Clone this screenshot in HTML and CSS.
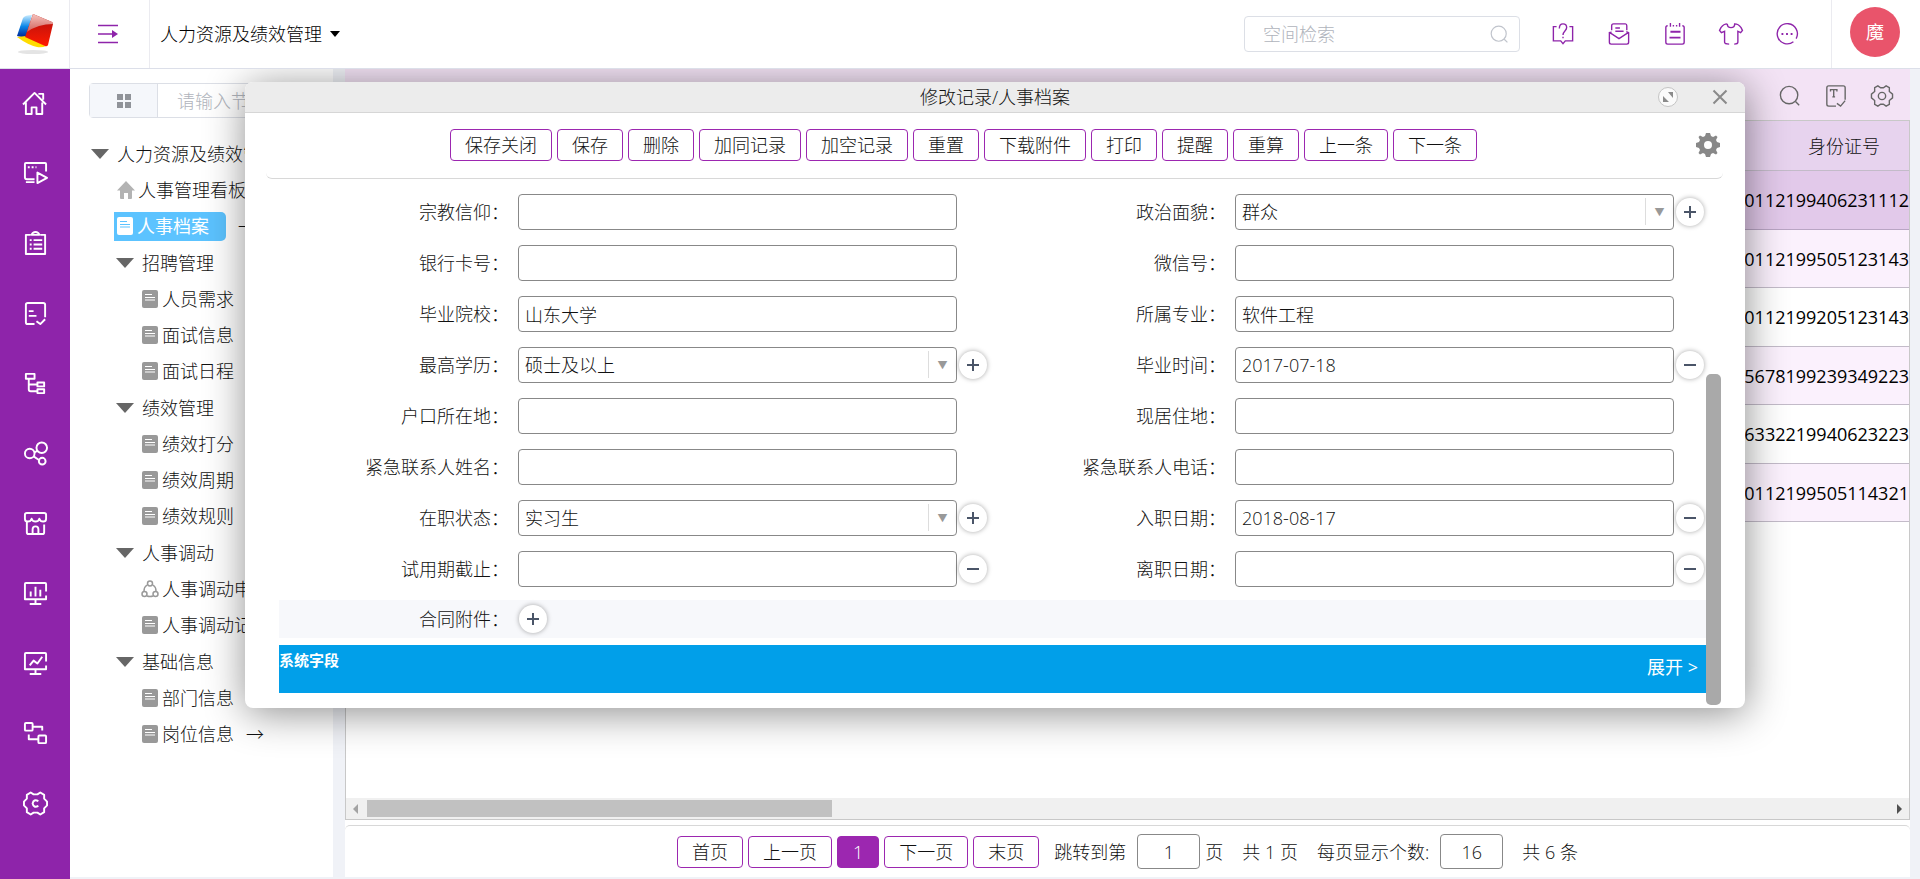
FILE: index.html
```html
<!DOCTYPE html>
<html lang="zh-CN">
<head>
<meta charset="utf-8">
<title>人力资源及绩效管理</title>
<link rel="stylesheet" href="styles.css">
</head>
<body>

<!-- shared icons -->
<svg class="defs" width="0" height="0">
  <symbol id="doc" viewBox="0 0 16 18">
    <rect width="16" height="18" rx="2" fill="currentColor"/>
    <path d="M3 4.5h7M3 7.5h10M3 10h10" class="doc-line"/>
  </symbol>
  <symbol id="search" viewBox="0 0 24 24"><circle cx="11" cy="11" r="9.5"/><path d="M18 18l4 4"/></symbol>
</svg>

<header class="topbar">
  <a class="logo" href="#" title="首页">
    <svg width="38" height="40" viewBox="0 0 38 40">
      <defs>
        <linearGradient id="lgRed" x1="0" y1="0" x2="0" y2="1"><stop offset="0" stop-color="#b01010"/><stop offset="1" stop-color="#ff1a00"/></linearGradient>
        <linearGradient id="lgBlue" x1="0" y1="0" x2="0" y2="1"><stop offset="0" stop-color="#c8ecff"/><stop offset=".5" stop-color="#0a86e8"/><stop offset="1" stop-color="#001a8c"/></linearGradient>
        <linearGradient id="lgShine" x1="0" y1="0" x2="0" y2="1"><stop offset="0" stop-color="#f6c4be"/><stop offset="1" stop-color="#d0605a"/></linearGradient>
      </defs>
      <ellipse cx="17" cy="38" rx="15" ry="2" fill="#e4e4e4"/>
      <path d="M7 4Q9 1 16 1L10 24L1 22z" fill="url(#lgBlue)"/>
      <path d="M1 23l9-1 20 10q-4 2-9 1-9-2-20-10z" fill="#ffdc00"/>
      <path d="M17 0l19 8q1 1 1 2l-5 21q-1 2-3 1L9 23z" fill="url(#lgRed)"/>
      <path d="M17 0l19 8q1 1 1 2Q22 10 11 18z" fill="url(#lgShine)"/>
    </svg>
  </a>
  <button class="collapse" type="button" title="折叠">
    <svg width="20" height="20" viewBox="0 0 20 20"><path d="M0 1.5h20M0 10h16M0 18.5h20"/><path class="fill" d="M14 6l6 4-6 4z"/></svg>
  </button>
  <button class="app-name" type="button">人力资源及绩效管理 <span class="caret"></span></button>
  <div class="top-search">
    <input type="text" placeholder="空间检索" aria-label="空间检索">
    <svg width="19" height="19" viewBox="0 0 24 24"><use href="#search"/></svg>
  </div>
  <nav class="top-icons">
    <a href="#" title="帮助"><svg viewBox="0 0 24 24"><path d="M5 4H1.5v15.500h8l2.500 3 2.500-3h8V4H19"/><path d="M8 6q0-5 4-5t4 4c0 3.500-4 4-4 8"/><path d="M12 15v1.500"/></svg></a>
    <a href="#" title="邮件"><svg viewBox="0 0 24 24"><path d="M4 8V3q0-2 2-2h13q1.500 0 1.500 2v5"/><path d="M8 5.500h5M8 9h9"/><path d="M4 10l-2.500.5V21q0 2 2 2h17q2 0 2-2V10.500L20 9.500M2 10.500l10 6.500 10-6.500"/></svg></a>
    <a href="#" title="日程"><svg viewBox="0 0 24 24"><path d="M4 3q-2 0-2 2v16q0 2 2 2h16q2 0 2-2V5q0-2-2-2"/><path d="M7 0v4M17 0v4M9.500 3h1.500M13 3h1.500"/><path class="bold" d="M7 9.500h11M6 16h12"/></svg></a>
    <a href="#" title="换肤"><svg viewBox="0 0 24 24"><path d="M8 1q0 4 4 4t4-4q4 0 7 4l1.500 3-2 2.500-3-1.500v12q0 2-4 2M10 23q-5 0-5-2V9l-3.500 1.500L-.5 8 1 5q3-4 7-4"/></svg></a>
    <a href="#" title="更多"><svg viewBox="0 0 24 24"><path d="M22 17A11 11 0 1 0 19 20.500"/><path class="bold" d="M6 12h2M11 12h2M16 12h2"/></svg></a>
  </nav>
  <div class="user"><button class="avatar" type="button">魔</button></div>
</header>

<div class="app">
  <nav class="sidebar">
    <a href="#" title="首页"><svg viewBox="0 0 26 26"><path d="M0 14L12 2l12 12M3 12v12h6v-7h5v7h6V12M16 3h5v6"/></svg></a>
    <a href="#" title="演示"><svg viewBox="0 0 26 26"><path d="M12 19H4q-2 0-2-2V3q0-1 1-1h20q1 0 1 1v8"/><path d="M3 22h9M15 12v11l10-5.500zM5 6.500h2M9 6.500h2M13 6.500h1"/></svg></a>
    <a href="#" title="清单"><svg viewBox="0 0 26 26"><path d="M8 4H3v20h20V4h-5M9 4h8q-1-3-4-3t-4 3z"/><path d="M7 9.500h2M11 9.500h9M7 14h2M11 14h9M7 18.500h2M11 18.500h9"/></svg></a>
    <a href="#" title="审批"><svg viewBox="0 0 26 26"><path d="M12 24H5q-2 0-2-2V4q0-2 2-2h16q2 0 2 2v13"/><path d="M6 10.500h5M6 15.500h8M14 21l4 3 5-5"/></svg></a>
    <a href="#" title="组织"><svg viewBox="0 0 26 26"><path d="M3 3h9v5H3zM15 12h7v4h-7zM15 19h7v4h-7zM6 8v11q0 2 2 2h7M6 14h9"/></svg></a>
    <a href="#" title="分享"><svg viewBox="0 0 26 26"><circle cx="7" cy="13" r="5"/><circle cx="19.500" cy="7" r="5.500"/><circle cx="20" cy="21" r="3.500"/><path d="M12 12l3-2M11 16l6 4"/></svg></a>
    <a href="#" title="商店"><svg viewBox="0 0 26 26"><path d="M4 11v11q0 2 2 2h14q2 0 2-2v-8M10 24v-5q0-3 3-3t3 3v5"/><path d="M2 8V4q0-2 2-2h18q2 0 2 2v4q0 3-3 3-3 0-4-3-1 3-4 3-3 0-4-3-1 3-4 3-3 0-3-3z"/></svg></a>
    <a href="#" title="报表"><svg viewBox="0 0 26 26"><path d="M24 11V3q0-1-1-1H3Q2 2 2 3v16h22v-4M13 19v5M7 24h12M8 11v5M13 6v10M18 9v7"/></svg></a>
    <a href="#" title="趋势"><svg viewBox="0 0 26 26"><path d="M24 11V3q0-1-1-1H3Q2 2 2 3v16h22v-4M13 19v5M7 24h12M7 15l4-5 4 3 5-7"/></svg></a>
    <a href="#" title="流程"><svg viewBox="0 0 26 26"><path d="M3 2h6q1 0 1 1v6q0 1-1 1H3q-1 0-1-1V3q0-1 1-1zM17 15h6q1 0 1 1v6q0 1-1 1h-6q-1 0-1-1v-6q0-1 1-1zM10 6h10v4M6 14v5h10"/></svg></a>
    <a href="#" title="设置"><svg viewBox="0 0 26 26"><path d="M8 1.500l3 2h4l3-2 4 2.500v4l3 3v4l-3 3v4l-4 2.500-3-2h-4l-3 2L4 22v-4l-3-3v-4l3-3V4z"/><path d="M16 10.500q-5-2.500-6 2.500 1 5 6 2.500"/></svg></a>
  </nav>

  <main class="workspace">
    <aside class="tree-panel">
      <div class="tree-search">
        <button type="button" title="视图"><svg width="14" height="14" viewBox="0 0 14 14"><path d="M0 0h6v6H0zM8 0h6v6H8zM0 8h6v6H0zM8 8h6v6H8z"/></svg></button>
        <input type="text" placeholder="请输入节点名称" aria-label="节点名称">
      </div>
      <ul class="tree">
        <li><a class="node" href="#"><i class="fold"></i>人力资源及绩效管理</a>
          <ul>
            <li><a class="node leaf" href="#"><svg class="home" width="18" height="18" viewBox="0 0 18 18"><path d="M9 0l9 9.500h-3V17q0 1-1 1h-3v-6H7v6H4q-1 0-1-1V9.500H0z"/></svg>人事管理看板</a></li>
            <li class="with-arrow"><a class="node leaf selected" href="#"><svg width="16" height="18"><use href="#doc"/></svg>人事档案</a><span class="go">→</span></li>
            <li class="group"><a class="node" href="#"><i class="fold"></i>招聘管理</a>
              <ul>
                <li><a class="node leaf" href="#"><svg width="16" height="18"><use href="#doc"/></svg>人员需求</a></li>
                <li><a class="node leaf" href="#"><svg width="16" height="18"><use href="#doc"/></svg>面试信息</a></li>
                <li><a class="node leaf" href="#"><svg width="16" height="18"><use href="#doc"/></svg>面试日程</a></li>
              </ul>
            </li>
            <li class="group"><a class="node" href="#"><i class="fold"></i>绩效管理</a>
              <ul>
                <li><a class="node leaf" href="#"><svg width="16" height="18"><use href="#doc"/></svg>绩效打分</a></li>
                <li><a class="node leaf" href="#"><svg width="16" height="18"><use href="#doc"/></svg>绩效周期</a></li>
                <li><a class="node leaf" href="#"><svg width="16" height="18"><use href="#doc"/></svg>绩效规则</a></li>
              </ul>
            </li>
            <li class="group"><a class="node" href="#"><i class="fold"></i>人事调动</a>
              <ul>
                <li><a class="node leaf" href="#"><svg class="flow" width="18" height="18" viewBox="0 0 18 18"><circle cx="9" cy="3.500" r="2.500"/><circle cx="3.500" cy="14" r="2.500"/><circle cx="14.500" cy="14" r="2.500"/><path d="M6 5Q3 7 3 11M12 5q3 2 3 6M6 16q3 1 6 0"/></svg>人事调动申请</a></li>
                <li><a class="node leaf" href="#"><svg width="16" height="18"><use href="#doc"/></svg>人事调动记录</a></li>
              </ul>
            </li>
            <li class="group"><a class="node" href="#"><i class="fold"></i>基础信息</a>
              <ul>
                <li><a class="node leaf" href="#"><svg width="16" height="18"><use href="#doc"/></svg>部门信息</a></li>
                <li class="with-arrow"><a class="node leaf" href="#"><svg width="16" height="18"><use href="#doc"/></svg>岗位信息</a><span class="go">→</span></li>
              </ul>
            </li>
          </ul>
        </li>
      </ul>
    </aside>

    <section class="content">
      <div class="grid-tools">
        <button type="button" title="搜索"><svg viewBox="0 0 24 24"><use href="#search"/></svg></button>
        <button type="button" title="表头"><svg viewBox="0 0 24 24"><path d="M12 23H4q-2 0-2-2V3q0-2 2-2h16q2 0 2 2v13M13 20l4 3 5-6"/><path d="M6 7V5h7v2M9.500 5v8M8 13h3"/></svg></button>
        <button type="button" title="设置"><svg viewBox="0 0 24 24"><path d="M7.500 1l3 2h3l3-2L20 3v4l3.500 3v4L20 17v4l-3.500 2-3-2h-3l-3 2L4 21v-4L.5 14v-4L4 7V3z"/><circle cx="12" cy="12" r="4"/></svg></button>
      </div>
      <div class="grid-box">
        <table>
          <thead><tr><th></th><th class="idcard">身份证号</th></tr></thead>
          <tbody>
            <tr class="current"><td></td><td>0112199406231112</td></tr>
            <tr><td></td><td>0112199505123143</td></tr>
            <tr><td></td><td>0112199205123143</td></tr>
            <tr><td></td><td>5678199239349223</td></tr>
            <tr><td></td><td>6332219940623223</td></tr>
            <tr><td></td><td>0112199505114321</td></tr>
          </tbody>
        </table>
        <div class="hscroll"><i class="left"></i><div class="thumb"></div><i class="right"></i></div>
      </div>
      <footer class="pager">
        <button class="btn" type="button">首页</button>
        <button class="btn" type="button">上一页</button>
        <button class="btn active" type="button">1</button>
        <button class="btn" type="button">下一页</button>
        <button class="btn" type="button">末页</button>
        <label class="jump" for="page">跳转到第</label>
        <input id="page" type="text" value="1">
        <span>页</span>
        <span class="total">共 1 页</span>
        <label class="size" for="size">每页显示个数:</label>
        <input id="size" type="text" value="16">
        <span class="total">共 6 条</span>
      </footer>
    </section>

    <div class="dialog" role="dialog" aria-labelledby="dlgTitle">
      <div class="dialog-head">
        <h1 id="dlgTitle">修改记录/人事档案</h1>
        <div class="dialog-ctrl">
          <button type="button" title="最大化"><svg width="20" height="20" viewBox="0 0 20 20"><circle cx="10" cy="10" r="9.500" fill="#fafafa" stroke="#c4c4c4"/><path d="M10 5h5v6zM5 9v6h6z" fill="#8a8a8a"/></svg></button>
          <button type="button" title="关闭"><svg width="16" height="16" viewBox="0 0 16 16"><path d="M1.500 1.500l13 13M14.500 1.500l-13 13" stroke="#8a8a8a" stroke-width="2"/></svg></button>
        </div>
      </div>
      <div class="dialog-tools">
        <button class="btn" type="button">保存关闭</button>
        <button class="btn" type="button">保存</button>
        <button class="btn" type="button">删除</button>
        <button class="btn" type="button">加同记录</button>
        <button class="btn" type="button">加空记录</button>
        <button class="btn" type="button">重置</button>
        <button class="btn" type="button">下载附件</button>
        <button class="btn" type="button">打印</button>
        <button class="btn" type="button">提醒</button>
        <button class="btn" type="button">重算</button>
        <button class="btn" type="button">上一条</button>
        <button class="btn" type="button">下一条</button>
        <button class="gear" type="button" title="设置"><svg width="24" height="24" viewBox="0 0 24 24"><path fill-rule="evenodd" d="M10 0h4l1 3 2 1 3-1.500L21.500 4 20 7l1 2 3 1v4l-3 1-1 2 1.500 3-1.500 1.500-3-1.500-2 1-1 3h-4l-1-3-2-1-3 1.500L2.500 20 4 17l-1-2-3-1v-4l3-1 1-2-1.500-3L4 2.500 7 4l2-1zM12 8a4 4 0 1 0 0 8 4 4 0 0 0 0-8z"/></svg></button>
      </div>
      <form class="dialog-body">
        <div class="fields">
          <div class="field"><label for="f1">宗教信仰：</label><input id="f1" type="text"></div>
          <div class="field"><label for="f2">政治面貌：</label><span class="select"><select id="f2"><option>群众</option></select></span><button class="round plus" type="button" title="新增"></button></div>
          <div class="field"><label for="f3">银行卡号：</label><input id="f3" type="text"></div>
          <div class="field"><label for="f4">微信号：</label><input id="f4" type="text"></div>
          <div class="field"><label for="f5">毕业院校：</label><input id="f5" type="text" value="山东大学"></div>
          <div class="field"><label for="f6">所属专业：</label><input id="f6" type="text" value="软件工程"></div>
          <div class="field"><label for="f7">最高学历：</label><span class="select"><select id="f7"><option>硕士及以上</option></select></span><button class="round plus" type="button" title="新增"></button></div>
          <div class="field"><label for="f8">毕业时间：</label><input id="f8" type="text" value="2017-07-18"><button class="round" type="button" title="清除"></button></div>
          <div class="field"><label for="f9">户口所在地：</label><input id="f9" type="text"></div>
          <div class="field"><label for="f10">现居住地：</label><input id="f10" type="text"></div>
          <div class="field"><label for="f11">紧急联系人姓名：</label><input id="f11" type="text"></div>
          <div class="field"><label for="f12">紧急联系人电话：</label><input id="f12" type="text"></div>
          <div class="field"><label for="f13">在职状态：</label><span class="select"><select id="f13"><option>实习生</option></select></span><button class="round plus" type="button" title="新增"></button></div>
          <div class="field"><label for="f14">入职日期：</label><input id="f14" type="text" value="2018-08-17"><button class="round" type="button" title="清除"></button></div>
          <div class="field"><label for="f15">试用期截止：</label><input id="f15" type="text"><button class="round" type="button" title="清除"></button></div>
          <div class="field"><label for="f16">离职日期：</label><input id="f16" type="text"><button class="round" type="button" title="清除"></button></div>
        </div>
        <div class="field attach"><label for="f17">合同附件：</label><button id="f17" class="round plus" type="button" title="上传"></button></div>
        <div class="sysbar"><h2>系统字段</h2><a href="#">展开 &gt;</a></div>
      </form>
      <div class="vthumb"></div>
    </div>
  </main>
</div>

</body>
</html>
```

FILE: styles.css
```css
* { box-sizing: border-box; }

body {
  margin: 0;
  height: 100vh;
  display: flex;
  flex-direction: column;
  overflow: hidden;
  background: #f0f2f7;
  color: #111;
  font-family: "Open Sans", "Noto Sans CJK SC", sans-serif;
  font-size: 18px;
  font-weight: 300;
  line-height: 24px;
}

button, input, select {
  font: inherit;
  color: inherit;
}

button {
  background: none;
  border: 0;
  padding: 0;
  display: flex;
  align-items: center;
  justify-content: center;
}

a { color: inherit; text-decoration: none; }

ul { list-style: none; margin: 0; padding: 0; }

svg { display: block; flex: none; overflow: visible; }

.defs { position: absolute; }

input::placeholder { color: #b0b4bc; opacity: 1; }

/* top bar */
.topbar {
  flex: none;
  height: 69px;
  display: flex;
  align-items: center;
  background: #fff;
  border-bottom: 1px solid #dcdfe9;
  position: relative;
  z-index: 1;
}

.logo, .collapse {
  align-self: stretch;
  display: flex;
  align-items: center;
  justify-content: center;
  border-right: 1px solid #ebebf0;
}

.logo { width: 70px; }

.collapse { width: 80px; padding-right: 3px; }

.collapse svg { fill: none; stroke: #8e24aa; stroke-width: 1.5; }

.collapse .fill { fill: #8e24aa; stroke: none; }

.app-name { margin-left: 10px; color: #000; }

.caret {
  margin-left: 8px;
  border: 5px solid transparent;
  border-top: 6px solid #000;
  border-bottom: 0;
}

.top-search {
  margin-left: auto;
  width: 276px;
  height: 36px;
  padding: 0 10px 0 18px;
  display: flex;
  align-items: center;
  border: 1px solid #dcdfe6;
  border-radius: 4px;
}

.top-search input {
  flex: 1;
  min-width: 0;
  border: 0;
  padding: 0;
  outline: 0;
}

.top-search svg { fill: none; stroke: #c0c4cc; stroke-width: 1.5; }

.top-icons {
  display: flex;
  gap: 34px;
  margin: 0 33px 0 32px;
}

.top-icons svg {
  width: 22px;
  height: 22px;
  fill: none;
  stroke: #8e24aa;
  stroke-width: 1.5;
}

.top-icons .bold { stroke-width: 2; }

.user {
  align-self: stretch;
  width: 89px;
  padding: 7px 2px 0 0;
  display: flex;
  justify-content: center;
  align-items: flex-start;
  border-left: 1px solid #ebebf0;
}

.avatar {
  width: 50px;
  height: 50px;
  border-radius: 50%;
  background: #e9546b;
  color: #fff;
  font-weight: 400;
}

/* left icon bar */
.app { flex: 1; min-height: 0; display: flex; }

.sidebar { flex: none; width: 70px; background: #8e24aa; }

.sidebar a {
  height: 70px;
  padding-bottom: 2px;
  display: flex;
  align-items: center;
  justify-content: center;
}

.sidebar svg {
  width: 25px;
  height: 25px;
  fill: none;
  stroke: #fff;
  stroke-width: 2;
  stroke-linejoin: round;
}

.workspace {
  flex: 1;
  min-width: 0;
  display: flex;
  gap: 12px;
  padding: 0 10px 2px 0;
  position: relative;
}

/* tree */
.tree-panel {
  flex: none;
  width: 263px;
  padding: 14px 16px 0 19px;
  background: #fff;
}

.tree-search {
  height: 35px;
  display: flex;
  border: 1px solid #dcdfe6;
  border-radius: 4px;
}

.tree-search button {
  width: 68px;
  background: #f5f7fb;
  border-right: 1px solid #dcdfe6;
}

.tree-search svg { fill: #909399; }

.tree-search input {
  flex: 1;
  min-width: 0;
  padding: 0 19px;
  border: 0;
  background: none;
}

.tree { margin-top: 18px; }

.tree ul { padding-left: 25px; }

.tree .group { margin-top: 1px; }

.node {
  height: 36px;
  display: flex;
  align-items: center;
  white-space: nowrap;
}

.fold {
  margin: 0 8px 0 2px;
  border: 9px solid transparent;
  border-top: 10px solid #666;
  border-bottom: 0;
}

.leaf { gap: 4px; padding-left: 3px; }

.leaf svg { color: #999; }

.doc-line { stroke: var(--line, #fff); }

.home { margin-right: -1px; fill: #b3b3b3; }

.flow { margin: 0 -1px; fill: none; stroke: #999; stroke-width: 1.5; }

.with-arrow { display: flex; align-items: center; height: 36px; }

.go { margin-left: 12px; }

.selected {
  --line: #5cc3ff;
  height: 29px;
  padding-right: 17px;
  background: #5cc3ff;
  border-radius: 0 5px 5px 0;
  color: #fff;
  font-weight: 400;
}

.selected svg { color: #fff; }

/* grid */
.content {
  flex: 1;
  min-width: 0;
  display: flex;
  flex-direction: column;
  background: #fff;
}

.grid-tools {
  flex: none;
  height: 51px;
  padding: 2px 17px 0;
  display: flex;
  justify-content: flex-end;
  align-items: center;
  gap: 24px;
  background: #f3e3f5;
}

.grid-tools svg {
  width: 22px;
  height: 22px;
  fill: none;
  stroke: #666;
  stroke-width: 1.5;
}

.grid-box {
  flex: 1;
  min-height: 0;
  display: flex;
  flex-direction: column;
  justify-content: space-between;
  border: 1px solid #c8c8c8;
}

.grid-box table {
  width: 100%;
  border-collapse: separate;
  border-spacing: 0;
}

.grid-box th, .grid-box td {
  padding: 0;
  border-bottom: 1px solid #c3bbc9;
}

.grid-box th {
  height: 50px;
  background: #e7d3ee;
  font-weight: 300;
}

.grid-box .idcard { width: 190px; padding-left: 60px; }

.grid-box td {
  height: 58px;
  color: #000;
  font-weight: 400;
  text-align: right;
}

.grid-box tr:nth-child(odd) td { height: 59px; }

.grid-box tr:nth-child(even) td { background: #fbf1fd; }

.grid-box .current td { background: #e2c9ea; border-color: #b9a5c4; }

.hscroll {
  height: 21px;
  padding: 0 7px;
  display: flex;
  align-items: center;
  gap: 9px;
  background: #f0f0f0;
}

.hscroll .thumb { width: 30%; height: 17px; background: #c1c1c1; }

.hscroll i { border: 5px solid transparent; }

.hscroll .left { border-left: 0; border-right-color: #a3a3a3; }

.hscroll .right { margin-left: auto; border-right: 0; border-left-color: #505050; }

.pager {
  flex: none;
  height: 52px;
  margin-top: 5px;
  display: flex;
  align-items: center;
  justify-content: center;
  gap: 5px;
  border-top: 1px solid #d8d8d8;
  border-radius: 5px;
  white-space: nowrap;
}

.pager input {
  width: 63px;
  height: 35px;
  text-align: center;
  border: 1px solid #888;
  border-radius: 4px;
}

.pager .jump { margin: 0 6px 0 10px; }

.pager .total { margin-left: 14px; }

.pager .size { margin: 0 6px 0 14px; }

.btn {
  height: 32px;
  padding: 0 14px;
  background: #fff;
  border: 1px solid #9c27b0;
  border-radius: 4px;
}

.btn.active { padding: 0 15px; background: #9c27b0; color: #fff; }

/* record dialog */
.dialog {
  position: absolute;
  top: 13px;
  left: 175px;
  right: 175px;
  background: #fff;
  border-radius: 8px;
  box-shadow: 1px 5px 40px rgba(0, 0, 0, .45);
}

.dialog-head {
  height: 31px;
  display: flex;
  align-items: center;
  justify-content: center;
  background: #ececec;
  border-bottom: 1px solid #d6d6d6;
  border-radius: 8px 8px 0 0;
}

.dialog-head h1 {
  margin: 0;
  font-size: 18px;
  font-weight: 300;
}

.dialog-ctrl {
  position: absolute;
  right: 17px;
  display: flex;
  gap: 34px;
}

.dialog-tools {
  margin: 0 22px 0 21px;
  height: 66px;
  padding: 0 62px 2px 0;
  display: flex;
  align-items: center;
  justify-content: center;
  gap: 5px;
  border-bottom: 1px solid #d8d8d8;
  border-radius: 6px;
  position: relative;
}

.gear { position: absolute; right: 3px; }

.gear svg { fill: #888; }

.dialog-body { margin: 0 39px 0 34px; padding: 7px 0 15px; }

.fields {
  display: grid;
  grid-template-columns: 1fr 1fr;
  margin-right: -7px;
}

.field {
  height: 51px;
  padding-right: 39px;
  display: flex;
  align-items: center;
}

.field label {
  flex: none;
  width: 230px;
  margin-right: 9px;
  text-align: right;
}

.field input, .select {
  flex: 1;
  min-width: 0;
  height: 36px;
  padding: 0 6px;
  background: #fff;
  border: 1px solid #888;
  border-radius: 4px;
}

.select { display: flex; align-items: center; padding-right: 0; }

.select select {
  flex: 1;
  min-width: 0;
  height: 28px;
  padding: 0;
  border: 0;
  appearance: none;
  background: none;
}

.select::after {
  content: "▼";
  width: 27px;
  height: 27px;
  border-left: 1px solid #ddd;
  color: #999;
  font-size: 10px;
  line-height: 29px;
  text-align: center;
}

.round {
  flex: none;
  width: 28px;
  height: 28px;
  margin: 0 -30px 0 2px;
  border-radius: 50%;
  background: #fff;
  box-shadow: 0 0 5px rgba(0, 0, 0, .35);
}

.round::before {
  content: "";
  width: 12px;
  height: 12px;
  background: linear-gradient(#4a5568, #4a5568) center / 12px 2px no-repeat;
}

.round.plus::before {
  background:
    linear-gradient(#4a5568, #4a5568) center / 12px 2px no-repeat,
    linear-gradient(#4a5568, #4a5568) center / 2px 12px no-repeat;
}

.attach { height: 38px; margin-top: 6px; background: #f7f8fb; }

.attach .round { margin: 0 1px; }

.sysbar {
  height: 48px;
  margin-top: 7px;
  padding-right: 8px;
  display: flex;
  justify-content: space-between;
  background: #019fe9;
  color: #fff;
}

.sysbar h2 {
  margin: 0;
  font-size: 15px;
  font-weight: 700;
  line-height: 30px;
}

.sysbar a { line-height: 44px; font-weight: 400; }

.vthumb {
  position: absolute;
  top: 292px;
  right: 24px;
  bottom: 3px;
  width: 15px;
  background: #a9a9a9;
  border-radius: 5px;
}
```
